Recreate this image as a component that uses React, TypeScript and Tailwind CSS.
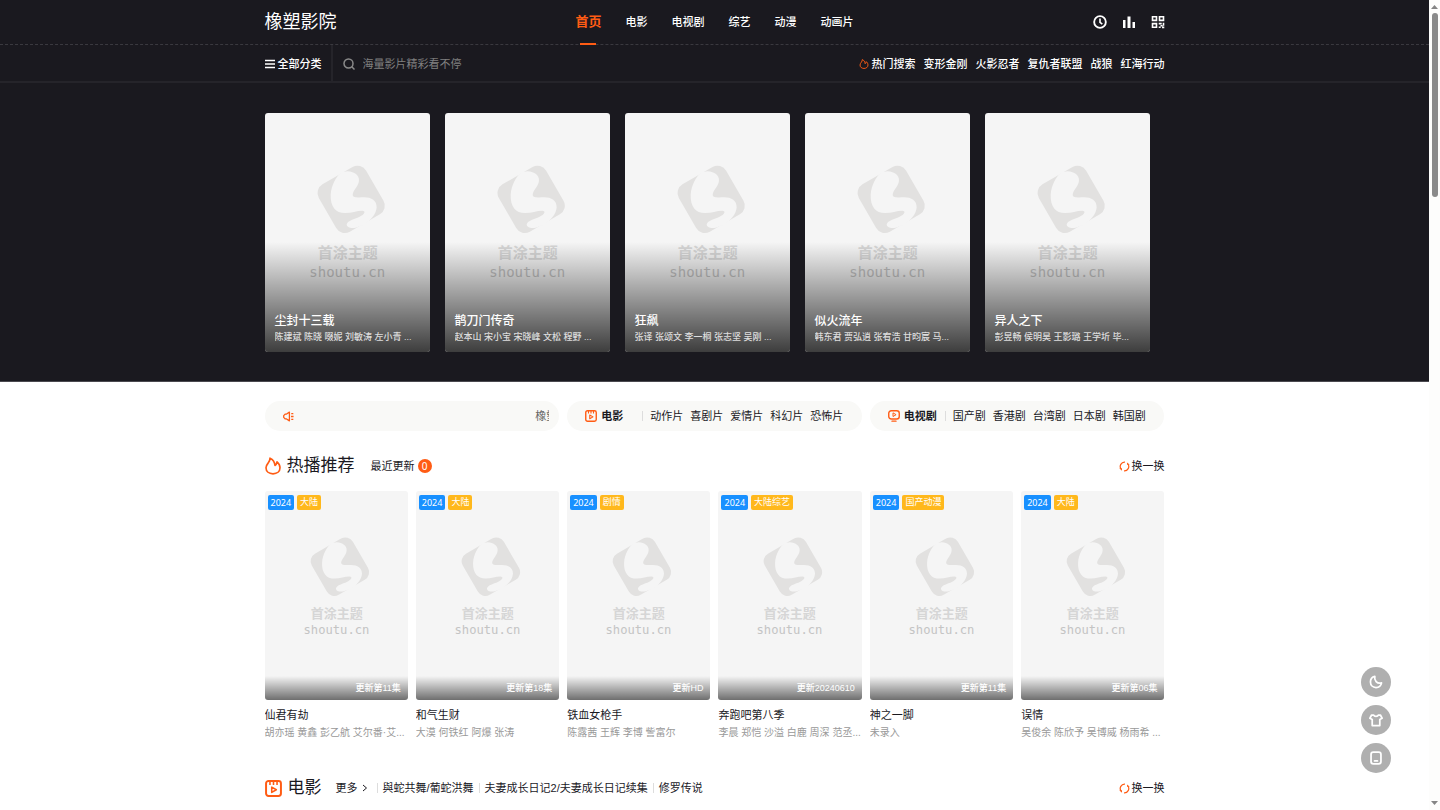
import React from 'react';

interface Movie {
  title: string;
  cast: string;
}

interface Show extends Movie {
  tag: string;
  status: string;
}

interface IconProps {
  className?: string;
}

const navItems = ['电影', '电视剧', '综艺', '动漫', '动画片'];
const hotWords = ['变形金刚', '火影忍者', '复仇者联盟', '战狼', '红海行动'];

const featured: Movie[] = [
  { title: '尘封十三载', cast: '陈建斌 陈晓 啜妮 刘敏涛 左小青 ...' },
  { title: '鹊刀门传奇', cast: '赵本山 宋小宝 宋晓峰 文松 程野 ...' },
  { title: '狂飙', cast: '张译 张颂文 李一桐 张志坚 吴刚 ...' },
  { title: '似火流年', cast: '韩东君 贾弘逍 张宥浩 甘昀宸 马...' },
  { title: '异人之下', cast: '彭昱畅 侯明昊 王影璐 王学圻 毕...' },
];

const shows: Show[] = [
  { title: '仙君有劫', cast: '胡亦瑶 黄鑫 彭乙航 艾尔番·艾...', tag: '大陆', status: '更新第11集' },
  { title: '和气生财', cast: '大漠 何铁红 阿爆 张涛', tag: '大陆', status: '更新第18集' },
  { title: '铁血女枪手', cast: '陈露茜 王辉 李博 訾富尔', tag: '剧情', status: '更新HD' },
  { title: '奔跑吧第八季', cast: '李晨 郑恺 沙溢 白鹿 周深 范丞...', tag: '大陆综艺', status: '更新20240610' },
  { title: '神之一脚', cast: '未录入', tag: '国产动漫', status: '更新第11集' },
  { title: '误情', cast: '吴俊余 陈欣予 吴博威 杨雨希 ...', tag: '大陆', status: '更新第06集' },
];

const movieGenres = ['动作片', '喜剧片', '爱情片', '科幻片', '恐怖片'];
const tvGenres = ['国产剧', '香港剧', '台湾剧', '日本剧', '韩国剧'];
const movieLinks = ['與蛇共舞/葡蛇洪舞', '夫妻成长日记2/夫妻成长日记续集', '修罗传说'];

const FlameIcon: React.FC<IconProps> = ({ className }) => (
  <svg viewBox="0 0 48 53" fill="none" stroke="currentColor" strokeWidth="5" strokeLinejoin="round" className={className}>
    <path d="M15 3C24 7 29 14 30 25C34 23 35 19 36 14C43 20 45 26 45 32C45 43 36 50 24 50C12 50 3 43 3 32C3 25 7 21 10 17C13 13 15 9 15 3Z" />
  </svg>
);

const FilmIcon: React.FC<IconProps> = ({ className }) => (
  <svg viewBox="0 0 24 24" fill="none" stroke="currentColor" strokeWidth="2.8" strokeLinejoin="round" className={className}>
    <rect x="1.5" y="1.5" width="21" height="21" rx="3.5" />
    <path d="M7 2v5M12 2v5M17 2v5" strokeWidth="2.2" />
    <path d="M9.500 10v7.500l6.500-3.750z" strokeWidth="2.2" />
  </svg>
);

const TvIcon: React.FC<IconProps> = ({ className }) => (
  <svg viewBox="0 0 24 24" fill="none" stroke="currentColor" strokeWidth="2.8" strokeLinejoin="round" strokeLinecap="round" className={className}>
    <rect x="1.5" y="1.5" width="21" height="16.500" rx="5" />
    <path d="M10 6.500v6.500l5.500-3.250z" strokeWidth="2" />
    <path d="M8 22.300h8" />
  </svg>
);

const SpeakerIcon: React.FC<IconProps> = ({ className }) => (
  <svg viewBox="0 0 24 24" fill="none" stroke="currentColor" strokeWidth="2.800" strokeLinejoin="round" className={className}>
    <path d="M14 2.500v19L7 17H4.500L1.500 14v-4L4.500 7H7z" />
    <path d="M17.500 12H23M18 5.500h4.500M18 18.500h4.500" />
  </svg>
);

const RefreshIcon: React.FC<IconProps> = ({ className }) => (
  <svg viewBox="0 0 24 24" fill="none" stroke="currentColor" strokeWidth="2.600" className={className}>
    <path d="M13 2.500A9.500 9.500 0 0 0 4.500 17.500" />
    <path d="M11 21.500A9.500 9.500 0 0 0 19.500 6.500" />
    <path d="M0.500 16h6v5zM23.500 8h-6V3z" fill="currentColor" stroke="none" />
  </svg>
);

const Placeholder: React.FC = () => (
  <svg viewBox="28 37 495 717" className="block h-full w-full" aria-hidden="true">
    <rect x="204.500" y="214" width="164" height="164" rx="30" fill="#e2e1e0" transform="rotate(-30 286.500 296)" />
    <path
      fill="#f5f5f5"
      d="M258 214C243 226 227 252 225 282C224 318 240 337 268 337C288 337 303 330 320 330C332 331 326 341 312 348C295 357 277 358 273 371C273 381 288 384 300 381L328 371C347 356 361 341 363 320C363 300 348 290 325 290C308 290 292 292 291 283C291 269 310 256 310 238C310 224 297 214 276 212Z"
    />
    <text x="186" y="472" fontSize="45" fontWeight="700" fill="#d6d6d6" fontFamily="'Noto Sans CJK SC', sans-serif">首涂主题</text>
    <text x="161" y="528" fontSize="42" fill="#c4c4c4" fontFamily="'DejaVu Sans Mono', monospace">shoutu.cn</text>
  </svg>
);

const Header: React.FC = () => (
  <header className="text-white">
    <div className="border-b border-dashed border-[#3a393f]">
      <div className="mx-auto grid h-11 max-w-[900px] grid-cols-[1fr_auto_1fr] items-center">
        <a href="#" className="text-[18px] leading-6">橡塑影院</a>
        <nav className="flex h-11 items-center gap-6 text-[11px] font-medium">
          <a href="#" className="relative flex h-11 items-center text-[13px] font-bold text-[#ff5c14]">
            首页
            <span className="absolute -bottom-px left-1/2 h-0.5 w-4 -translate-x-1/2 bg-[#ff5c14]" />
          </a>
          {navItems.map((item) => (
            <a key={item} href="#">{item}</a>
          ))}
        </nav>
        <div className="flex items-center justify-end gap-[15px]">
          <button type="button" aria-label="历史">
            <svg viewBox="0 0 24 24" fill="none" stroke="currentColor" strokeWidth="3.2" className="block size-3.5">
              <circle cx="12" cy="12" r="10" />
              <path d="M12 6v6.500l4 3" strokeWidth="2.800" />
            </svg>
          </button>
          <button type="button" aria-label="排行">
            <svg viewBox="0 0 14 14" fill="currentColor" className="block size-3.5">
              <path d="M1 5h2.500v8H1zM5.500 1.500H8.500V13H5.500zM10.500 7h2.500v6H10.500z" />
            </svg>
          </button>
          <button type="button" aria-label="二维码">
            <svg viewBox="0 0 14 14" fill="none" stroke="currentColor" strokeWidth="1.600" className="block size-3.5">
              <path d="M1.500 1.800h4v3.600h-4zM8.500 1.800h4v3.600h-4zM1.500 8.600h4v3.600h-4z" />
              <path d="M7.700 8.600h3M12.500 7.800v3M9.500 10.800h2M7.700 12.200h2M11 12.400h2.300" strokeWidth="1.600" />
            </svg>
          </button>
        </div>
      </div>
    </div>
    <div className="border-b-2 border-[#25242a]">
      <div className="mx-auto flex h-9 max-w-[900px] items-center text-[11px] font-medium">
        <button type="button" className="flex h-9 w-[68px] items-center gap-[3px] border-r-2 border-[#25242a] pt-0.5">
          <svg viewBox="0 0 10 10" stroke="currentColor" strokeWidth="1.500" className="size-2.5 shrink-0">
            <path d="M0 1.500h10M0 5h10M0 8.500h10" />
          </svg>
          <span className="whitespace-nowrap">全部分类</span>
        </button>
        <label className="flex flex-1 items-center gap-2 pt-0.5 pl-2.5">
          <svg viewBox="0 0 12 12" fill="none" stroke="#8a8a8a" strokeWidth="1.500" className="size-3 shrink-0">
            <circle cx="5.500" cy="5.500" r="4.500" />
            <path d="M8.800 8.800l2.700 2.700" />
          </svg>
          <input
            type="text"
            aria-label="搜索"
            placeholder="海量影片精彩看不停"
            className="w-full bg-transparent text-[11px] font-normal outline-none placeholder:text-[#808080]"
          />
        </label>
        <div className="flex items-center gap-2 pt-0.5">
          <span className="flex items-center gap-[3px]">
            <FlameIcon className="size-2.5 text-[#ff5c14]" />
            热门搜索
          </span>
          {hotWords.map((word) => (
            <a key={word} href="#">{word}</a>
          ))}
        </div>
      </div>
    </div>
  </header>
);

const FeaturedCard: React.FC<{ movie: Movie }> = ({ movie }) => (
  <a href="#" className="relative block aspect-[165/239] overflow-hidden rounded-[3px] bg-[#f5f5f5]">
    <Placeholder />
    <div className="absolute inset-x-0 bottom-0 flex h-[110px] flex-col justify-end bg-linear-to-b from-black/0 to-black/75 px-2.5 pb-[7px] text-white">
      <h3 className="text-[12px] leading-4 font-medium">{movie.title}</h3>
      <p className="overflow-hidden text-[9px] leading-4 font-medium whitespace-nowrap text-[#ddd]">{movie.cast}</p>
    </div>
  </a>
);

interface GenrePillProps {
  name: string;
  icon: React.ReactNode;
  genres: string[];
}

const GenrePill: React.FC<GenrePillProps> = ({ name, icon, genres }) => (
  <div className="flex h-[30px] items-center rounded-full bg-[#f9f9f7] pl-[18px] text-[11px]">
    <a href="#" className="flex w-[57px] items-center gap-1 font-bold">
      {icon}
      {name}
    </a>
    <div className="h-2.5 w-px bg-[#ddd]" />
    <div className="flex gap-[7px] pl-[7px] whitespace-nowrap">
      {genres.map((genre) => (
        <a key={genre} href="#">{genre}</a>
      ))}
    </div>
  </div>
);

const ShuffleButton: React.FC = () => (
  <button type="button" className="ml-auto flex items-center gap-0.5 text-[11px]">
    <RefreshIcon className="size-[11px] text-[#ff5c14]" />
    换一换
  </button>
);

const ShowCard: React.FC<{ show: Show }> = ({ show }) => (
  <li className="min-w-0">
    <a href="#" className="relative block h-[209px] overflow-hidden rounded-[3px] bg-[#f5f5f5]">
      <Placeholder />
      <div className="absolute top-1 left-[3px] flex gap-[3px] text-[9px] leading-[15px] text-white">
        <span className="rounded-xs bg-[#1890ff] px-[3px] font-['Noto_Sans']">2024</span>
        <span className="rounded-xs bg-[#ffb81c] px-[3px]">{show.tag}</span>
      </div>
      <div className="absolute inset-x-0 bottom-0 h-6 bg-linear-to-b from-black/0 to-black/55 pr-[7px] text-right text-[9px] leading-6 font-medium text-white">
        {show.status}
      </div>
    </a>
    <h3 className="mt-1.5 truncate text-[11px] leading-[18px]">{show.title}</h3>
    <p className="overflow-hidden text-[10px] leading-[18px] whitespace-nowrap text-[#999]">{show.cast}</p>
  </li>
);

const FloatingTools: React.FC = () => (
  <div className="fixed right-[49px] bottom-[37px] flex flex-col gap-2 text-white">
    <button type="button" aria-label="夜间模式" className="flex size-[30px] items-center justify-center rounded-full bg-[#afafaf]">
      <svg viewBox="0 0 24 24" fill="none" stroke="currentColor" strokeWidth="3" strokeLinejoin="round" className="size-3.5">
        <path d="M10 2.500C8.500 9 13.500 15.500 21.500 13.500C20.500 18.500 16.500 21.500 12 21.500C6.500 21.500 2.500 17.500 2.500 12C2.500 7.500 5.500 3.500 10 2.500Z" />
      </svg>
    </button>
    <button type="button" aria-label="换肤" className="flex size-[30px] items-center justify-center rounded-full bg-[#afafaf]">
      <svg viewBox="0 0 24 24" fill="none" stroke="currentColor" strokeWidth="3" strokeLinejoin="round" className="size-3.5">
        <path d="M8 3.500C9 6.500 15 6.500 16 3.500H19.500L22.500 9L18.500 11V21.500H5.500V11L1.500 9L4.500 3.500Z" />
      </svg>
    </button>
    <button type="button" aria-label="手机版" className="flex size-[30px] items-center justify-center rounded-full bg-[#afafaf]">
      <svg viewBox="0 0 24 24" fill="none" stroke="currentColor" strokeWidth="3" strokeLinecap="round" className="size-3.5">
        <rect x="3.500" y="2" width="17" height="20" rx="4" />
        <path d="M9.500 17h5" />
      </svg>
    </button>
  </div>
);

const App: React.FC = () => {
  return (
    <div className="flex h-screen overflow-hidden bg-white font-['Liberation_Sans','Noto_Sans_CJK_SC',sans-serif] text-[#1a191f]">
      <div className="min-w-0 flex-1">
        <div className="border-b border-[#4a494f] bg-[#1a191f]">
          <Header />
          <section className="mx-auto max-w-[900px] pt-[30px] pb-[29px]">
            <div className="grid grid-cols-5 gap-[15px] pr-[15px]">
              {featured.map((movie) => (
                <FeaturedCard key={movie.title} movie={movie} />
              ))}
            </div>
          </section>
        </div>

        <main className="mx-auto max-w-[900px]">
          <div className="grid grid-cols-3 gap-2 pt-[19px]">
            <div className="flex h-[30px] items-center rounded-full bg-[#f9f9f7] pr-2.5 pl-[18px] text-[11px] text-[#666]">
              <SpeakerIcon className="size-[11px] shrink-0 text-[#ff5c14]" />
              <div className="ml-auto w-3.5 overflow-hidden whitespace-nowrap">橡塑影院</div>
            </div>
            <GenrePill name="电影" icon={<FilmIcon className="size-3 text-[#ff5c14]" />} genres={movieGenres} />
            <GenrePill name="电视剧" icon={<TvIcon className="size-3 text-[#ff5c14]" />} genres={tvGenres} />
          </div>

          <section className="pt-[22px]">
            <div className="mb-3 flex h-[26px] items-center">
              <FlameIcon className="h-[18px] w-4 text-[#ff5c14]" />
              <h2 className="ml-1.5 text-[17px] leading-6">热播推荐</h2>
              <a href="#" className="ml-4 flex items-center gap-[3px] text-[11px]">
                最近更新
                <span className="flex size-3.5 items-center justify-center rounded-full bg-[#ff5c14] font-['Noto_Sans'] text-[10px] text-white">0</span>
              </a>
              <ShuffleButton />
            </div>
            <ul className="grid grid-cols-6 gap-2">
              {shows.map((show) => (
                <ShowCard key={show.title} show={show} />
              ))}
            </ul>
          </section>

          <section className="pt-[33px]">
            <div className="flex h-[26px] items-center">
              <FilmIcon className="size-[17px] text-[#ff5c14]" />
              <h2 className="ml-1.5 text-[17px] leading-6">电影</h2>
              <a href="#" className="ml-3.5 flex items-center gap-1 pr-1 text-[11px]">
                更多
                <svg viewBox="0 0 6 8" fill="none" stroke="currentColor" className="h-2 w-1.5">
                  <path d="M1 1l3.500 3L1 7" />
                </svg>
              </a>
              <div className="flex items-center text-[11px] leading-3">
                {movieLinks.map((link) => (
                  <React.Fragment key={link}>
                    <span className="mx-[5px] h-2.5 w-px bg-[#ddd]" />
                    <a href="#">{link}</a>
                  </React.Fragment>
                ))}
              </div>
              <ShuffleButton />
            </div>
          </section>
        </main>
      </div>

      {/* scroll track */}
      <div className="flex w-[11px] shrink-0 flex-col items-center bg-[#fdfdfc] py-[5px]" aria-hidden="true">
        <svg viewBox="0 0 7 4" fill="#858585" className="h-1 w-[7px]">
          <path d="M3.500 0L7 4H0z" />
        </svg>
        <div className="mt-1 h-[23%] w-1.5 rounded-full bg-[#8a8a8a]" />
        <svg viewBox="0 0 7 4" fill="#858585" className="mt-auto h-1 w-[7px]">
          <path d="M0 0h7L3.500 4z" />
        </svg>
      </div>
      <FloatingTools />
    </div>
  );
};

export default App;
